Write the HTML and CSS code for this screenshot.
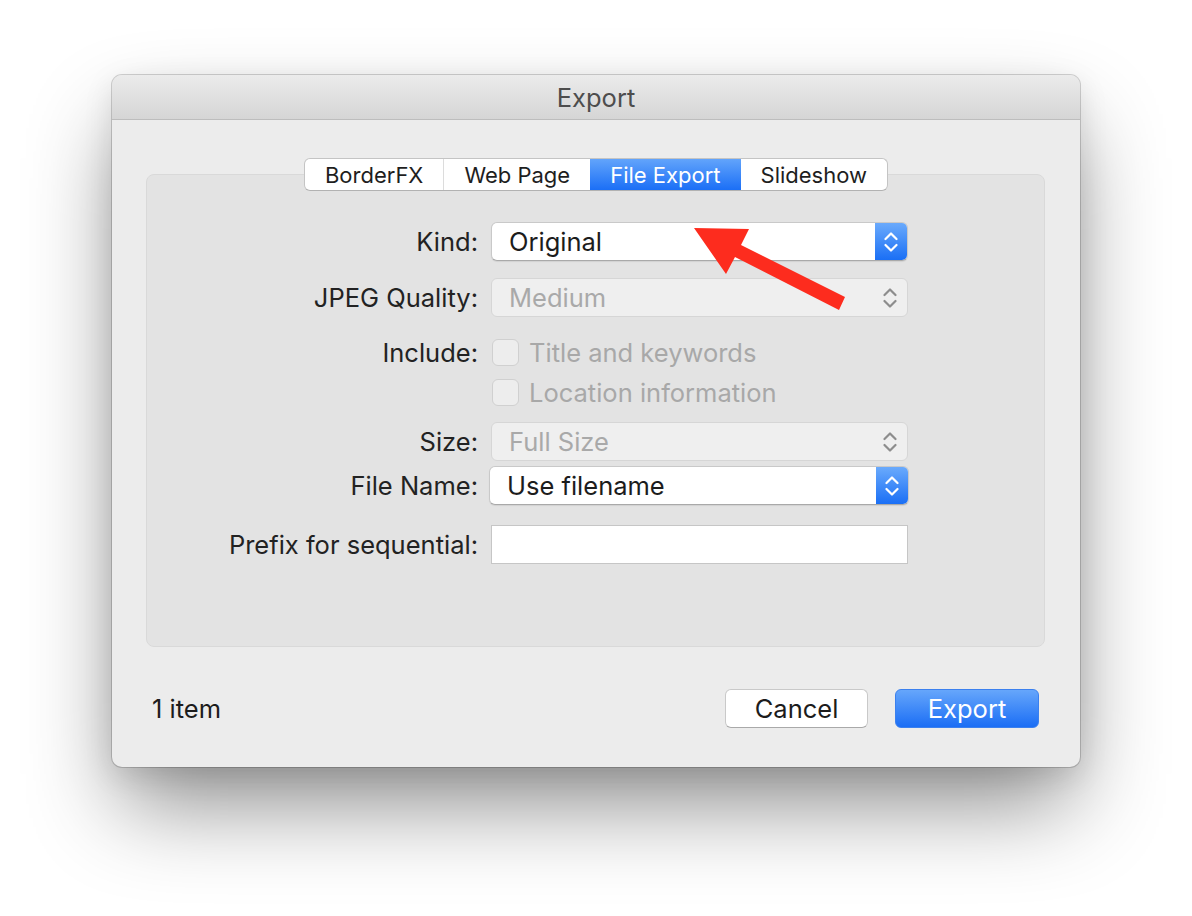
FILE: index.html
```html
<!DOCTYPE html>
<html>
<head>
<meta charset="utf-8">
<title>Export</title>
<link rel="stylesheet" href="styles.css">
</head>
<body>
<div class="window">
  <div class="titlebar">Export</div>
  <div class="content">
    <div class="tabs">
      <div class="tab">BorderFX</div>
      <div class="tab">Web Page</div>
      <div class="tab tab-selected">File Export</div>
      <div class="tab">Slideshow</div>
    </div>
    <div class="group">
      <div class="row row-kind">
        <div class="label">Kind:</div>
        <div class="popup">
          <span class="popup-text">Original</span>
          <span class="stepper">
            <svg width="14" height="24" viewBox="0 0 14 24"><path d="M1.5 9 L7 3.5 L12.5 9 M1.5 15 L7 20.5 L12.5 15" fill="none" stroke="#fff" stroke-width="2.2" stroke-linecap="round" stroke-linejoin="round"/></svg>
          </span>
        </div>
      </div>
      <div class="row row-jpeg">
        <div class="label">JPEG Quality:</div>
        <div class="popup popup-disabled">
          <span class="popup-text">Medium</span>
          <span class="stepper stepper-disabled">
            <svg width="14" height="24" viewBox="0 0 14 24"><path d="M1.5 9 L7 3.5 L12.5 9 M1.5 15 L7 20.5 L12.5 15" fill="none" stroke="#8d8d8d" stroke-width="2.2" stroke-linecap="round" stroke-linejoin="round"/></svg>
          </span>
        </div>
      </div>
      <div class="row row-include">
        <div class="label">Include:</div>
        <div class="check"><span class="box"></span><span class="check-text">Title and keywords</span></div>
      </div>
      <div class="row row-location">
        <div class="label"></div>
        <div class="check"><span class="box"></span><span class="check-text">Location information</span></div>
      </div>
      <div class="row row-size">
        <div class="label">Size:</div>
        <div class="popup popup-disabled">
          <span class="popup-text">Full Size</span>
          <span class="stepper stepper-disabled">
            <svg width="14" height="24" viewBox="0 0 14 24"><path d="M1.5 9 L7 3.5 L12.5 9 M1.5 15 L7 20.5 L12.5 15" fill="none" stroke="#8d8d8d" stroke-width="2.2" stroke-linecap="round" stroke-linejoin="round"/></svg>
          </span>
        </div>
      </div>
      <div class="row row-filename">
        <div class="label">File Name:</div>
        <div class="popup popup-wide">
          <span class="popup-text popup-text-fn">Use filename</span>
          <span class="stepper">
            <svg width="14" height="24" viewBox="0 0 14 24"><path d="M1.5 9 L7 3.5 L12.5 9 M1.5 15 L7 20.5 L12.5 15" fill="none" stroke="#fff" stroke-width="2.2" stroke-linecap="round" stroke-linejoin="round"/></svg>
          </span>
        </div>
      </div>
      <div class="row row-prefix">
        <div class="label">Prefix for sequential:</div>
        <div class="textfield"></div>
      </div>
    </div>
    <div class="footer">
      <div class="count">1 item</div>
      <div class="buttons">
        <div class="btn btn-cancel">Cancel</div>
        <div class="btn btn-default">Export</div>
      </div>
    </div>
  </div>
</div>
<svg class="arrow" width="1192" height="916" viewBox="0 0 1192 916">
  <polygon points="694,228 749,229 741,245 845,297 839,310 735,257 726,274" fill="#fd2c1e"/>
</svg>
</body>
</html>
```

FILE: styles.css
```css
html, body {
  margin: 0;
  padding: 0;
  background: #ffffff;
}
body {
  width: 1192px;
  height: 916px;
  overflow: hidden;
  position: relative;
  font-family: "Inter", "Noto Sans", sans-serif;
  color: #1f1f1f;
}
.window {
  margin: 75px 0 0 112px;
  width: 968px;
  height: 692px;
  background: #ececec;
  border-radius: 10px;
  box-shadow: 0 0 0 1px rgba(0,0,0,0.17), 0 45px 90px -8px rgba(0,0,0,0.45), 0 8px 30px rgba(0,0,0,0.10);
  overflow: hidden;
  display: flex;
  flex-direction: column;
}
.titlebar {
  height: 44px;
  border-bottom: 1px solid #bdbdbd;
  background: linear-gradient(#ebebeb, #d5d5d5);
  display: flex;
  align-items: center;
  justify-content: center;
  font-size: 25.5px;
  color: #4d4d4d;
}
.content {
  flex: 1;
  padding: 38px 35px 0 34px;
  display: flex;
  flex-direction: column;
}
.tabs {
  align-self: center;
  display: flex;
  height: 33px;
  box-sizing: border-box;
  background: #fff;
  border: 1px solid #c4c4c4;
  border-bottom-color: #b2b2b2;
  border-radius: 6px;
  overflow: hidden;
  margin-bottom: -17px;
  position: relative;
  z-index: 1;
  margin-left: 1px;
}
.tab {
  padding: 0 20px;
  font-size: 22px;
  display: flex;
  align-items: center;
  color: #1e1e1e;
  border-left: 1px solid #dcdcdc;
}
.tab:first-child {
  border-left: none;
}
.tab-selected {
  background: linear-gradient(#62a4fb, #1b6ff6);
  color: #fff;
  border-left: none;
}
.tab-selected + .tab {
  border-left: none;
}
.group {
  height: 473px;
  box-sizing: border-box;
  background: #e3e3e3;
  border: 1px solid #d9d9d9;
  border-radius: 8px;
  padding-top: 47px;
}
.row {
  display: grid;
  grid-template-columns: 331px 417px;
  column-gap: 13px;
  align-items: center;
}
.label {
  text-align: right;
  font-size: 25.5px;
  color: #222;
}
.row-kind { height: 39px; }
.row-jpeg { height: 39px; margin-top: 17px; }
.row-include { height: 40px; margin-top: 15px; }
.row-location { height: 40px; }
.row-size { height: 39px; margin-top: 10px; }
.row-filename { height: 39px; margin-top: 5px; }
.row-prefix { height: 39px; margin-top: 20px; }
.popup {
  height: 39px;
  box-sizing: border-box;
  background: #fff;
  border-radius: 6px;
  border: 1px solid #c9c9c9;
  border-bottom-color: #a9a9a9;
  box-shadow: 0 1px 1px rgba(0,0,0,0.08);
  display: flex;
  align-items: center;
  overflow: hidden;
}
.popup-wide {
  margin-left: -2px;
  margin-right: -1px;
}
.popup-text {
  flex: 1;
  padding-left: 17px;
  font-size: 25.5px;
  color: #1c1c1c;
}
.popup-text-fn {
  padding-left: 17px;
}
.stepper {
  width: 32px;
  align-self: stretch;
  background: linear-gradient(#6aaafc, #1a6ff5);
  display: flex;
  align-items: center;
  justify-content: center;
}
.popup-disabled {
  background: #efefef;
  border: 1px solid #d6d6d6;
  box-shadow: none;
}
.popup-disabled .popup-text {
  color: #a9a9a9;
}
.stepper-disabled {
  background: transparent;
  width: 34px;
}
.check {
  display: flex;
  align-items: center;
  gap: 10px;
}
.box {
  width: 27px;
  height: 27px;
  box-sizing: border-box;
  margin-left: 1px;
  border-radius: 6px;
  background: #ededed;
  border: 1px solid #d0d0d0;
}
.check-text {
  font-size: 25.5px;
  color: #a8a8a8;
}
.textfield {
  height: 39px;
  box-sizing: border-box;
  background: #fff;
  border: 1px solid #c6c6c6;
}
.footer {
  flex: 1;
  display: flex;
  align-items: center;
  justify-content: space-between;
  padding: 3px 6px 0 6px;
}
.count {
  font-size: 25.5px;
  color: #1c1c1c;
}
.buttons {
  display: flex;
  gap: 27px;
}
.btn {
  height: 39px;
  box-sizing: border-box;
  border-radius: 6px;
  display: flex;
  align-items: center;
  justify-content: center;
  font-size: 25.5px;
}
.btn-cancel {
  width: 143px;
  background: #fff;
  border: 1px solid #c9c9c9;
  border-bottom-color: #a9a9a9;
  color: #1c1c1c;
}
.btn-default {
  width: 144px;
  background: linear-gradient(#66a6fb, #1b6ef5);
  border: 1px solid #3b80ee;
  color: #fff;
}
.arrow {
  position: absolute;
  left: 0;
  top: 0;
  pointer-events: none;
}
```
